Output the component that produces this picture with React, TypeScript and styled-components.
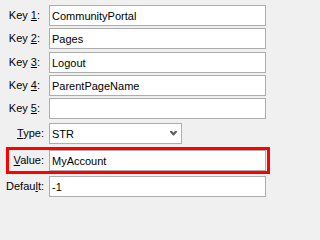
import React from 'react';
import styled, { createGlobalStyle } from 'styled-components';

const GlobalStyle = createGlobalStyle`
  html, body { margin: 0; padding: 0; background: #f0f0f0; }
  body { font-family: "Liberation Sans", Arial, sans-serif; font-size: 11px; color: #000; }
`;

const Panel = styled.div`
  width: 271px;
  height: 202px;
  display: flex;
  flex-direction: column;
  padding-top: 5px;
  box-sizing: border-box;
  overflow: hidden;
`;

const Row = styled.div<{ $top: number }>`
  display: flex;
  align-items: center;
  height: 21px;
  margin-top: ${({ $top }) => $top}px;
`;

const Highlight = styled.div<{ $top: number }>`
  display: flex;
  align-items: center;
  box-sizing: border-box;
  width: 264px;
  height: 27px;
  margin: ${({ $top }) => $top}px 0 0 6px;
  border: 3px solid #ff0000;
`;

const Label = styled.label<{ $width: number; $pad: number }>`
  flex-shrink: 0;
  box-sizing: border-box;
  width: ${({ $width }) => $width}px;
  padding-right: ${({ $pad }) => $pad}px;
  text-align: right;
  white-space: nowrap;
  line-height: 21px;
`;

const Key = styled.u`
  text-decoration: underline;
  text-underline-offset: 1px;
`;

const Field = styled.input`
  box-sizing: border-box;
  width: 217px;
  height: 21px;
  margin: 0;
  padding: 0 2px;
  border: 1px solid #adadad;
  border-radius: 0;
  background: #fff;
  font: inherit;
  color: #000;
  outline: none;
`;

const Combo = styled.div`
  box-sizing: border-box;
  display: flex;
  align-items: center;
  justify-content: space-between;
  width: 133px;
  height: 21px;
  padding: 0 4px 0 2px;
  border: 1px solid #adadad;
  background: #fff;
`;

const Chevron = () => (
  <svg width="7" height="5" viewBox="0 0 7 5">
    <path d="M0 0 H2 L3.5 1.8 L5 0 H7 V1 L4 4.5 H3 L0 1 Z" fill="#606060" />
  </svg>
);

const keys = [
  { n: '1', value: 'CommunityPortal', top: 0 },
  { n: '2', value: 'Pages', top: 2 },
  { n: '3', value: 'Logout', top: 3 },
  { n: '4', value: 'ParentPageName', top: 2 },
  { n: '5', value: '', top: 2 },
];

export default function App() {
  return (
    <>
      <GlobalStyle />
      <Panel>
        {keys.map((k) => (
          <Row key={k.n} $top={k.top}>
            <Label $width={49} $pad={9}>
              Key <Key>{k.n}</Key>:
            </Label>
            <Field readOnly defaultValue={k.value} />
          </Row>
        ))}
        <Row $top={4}>
          <Label $width={49} $pad={5}>
            <Key>T</Key>ype:
          </Label>
          <Combo>
            <span>STR</span>
            <Chevron />
          </Combo>
        </Row>
        <Highlight $top={3}>
          <Label $width={40} $pad={5}>
            <Key>V</Key>alue:
          </Label>
          <Field readOnly defaultValue="MyAccount" />
        </Highlight>
        <Row $top={2}>
          <Label $width={49} $pad={5}>
            Defau<Key>l</Key>t:
          </Label>
          <Field readOnly defaultValue="-1" />
        </Row>
      </Panel>
    </>
  );
}
